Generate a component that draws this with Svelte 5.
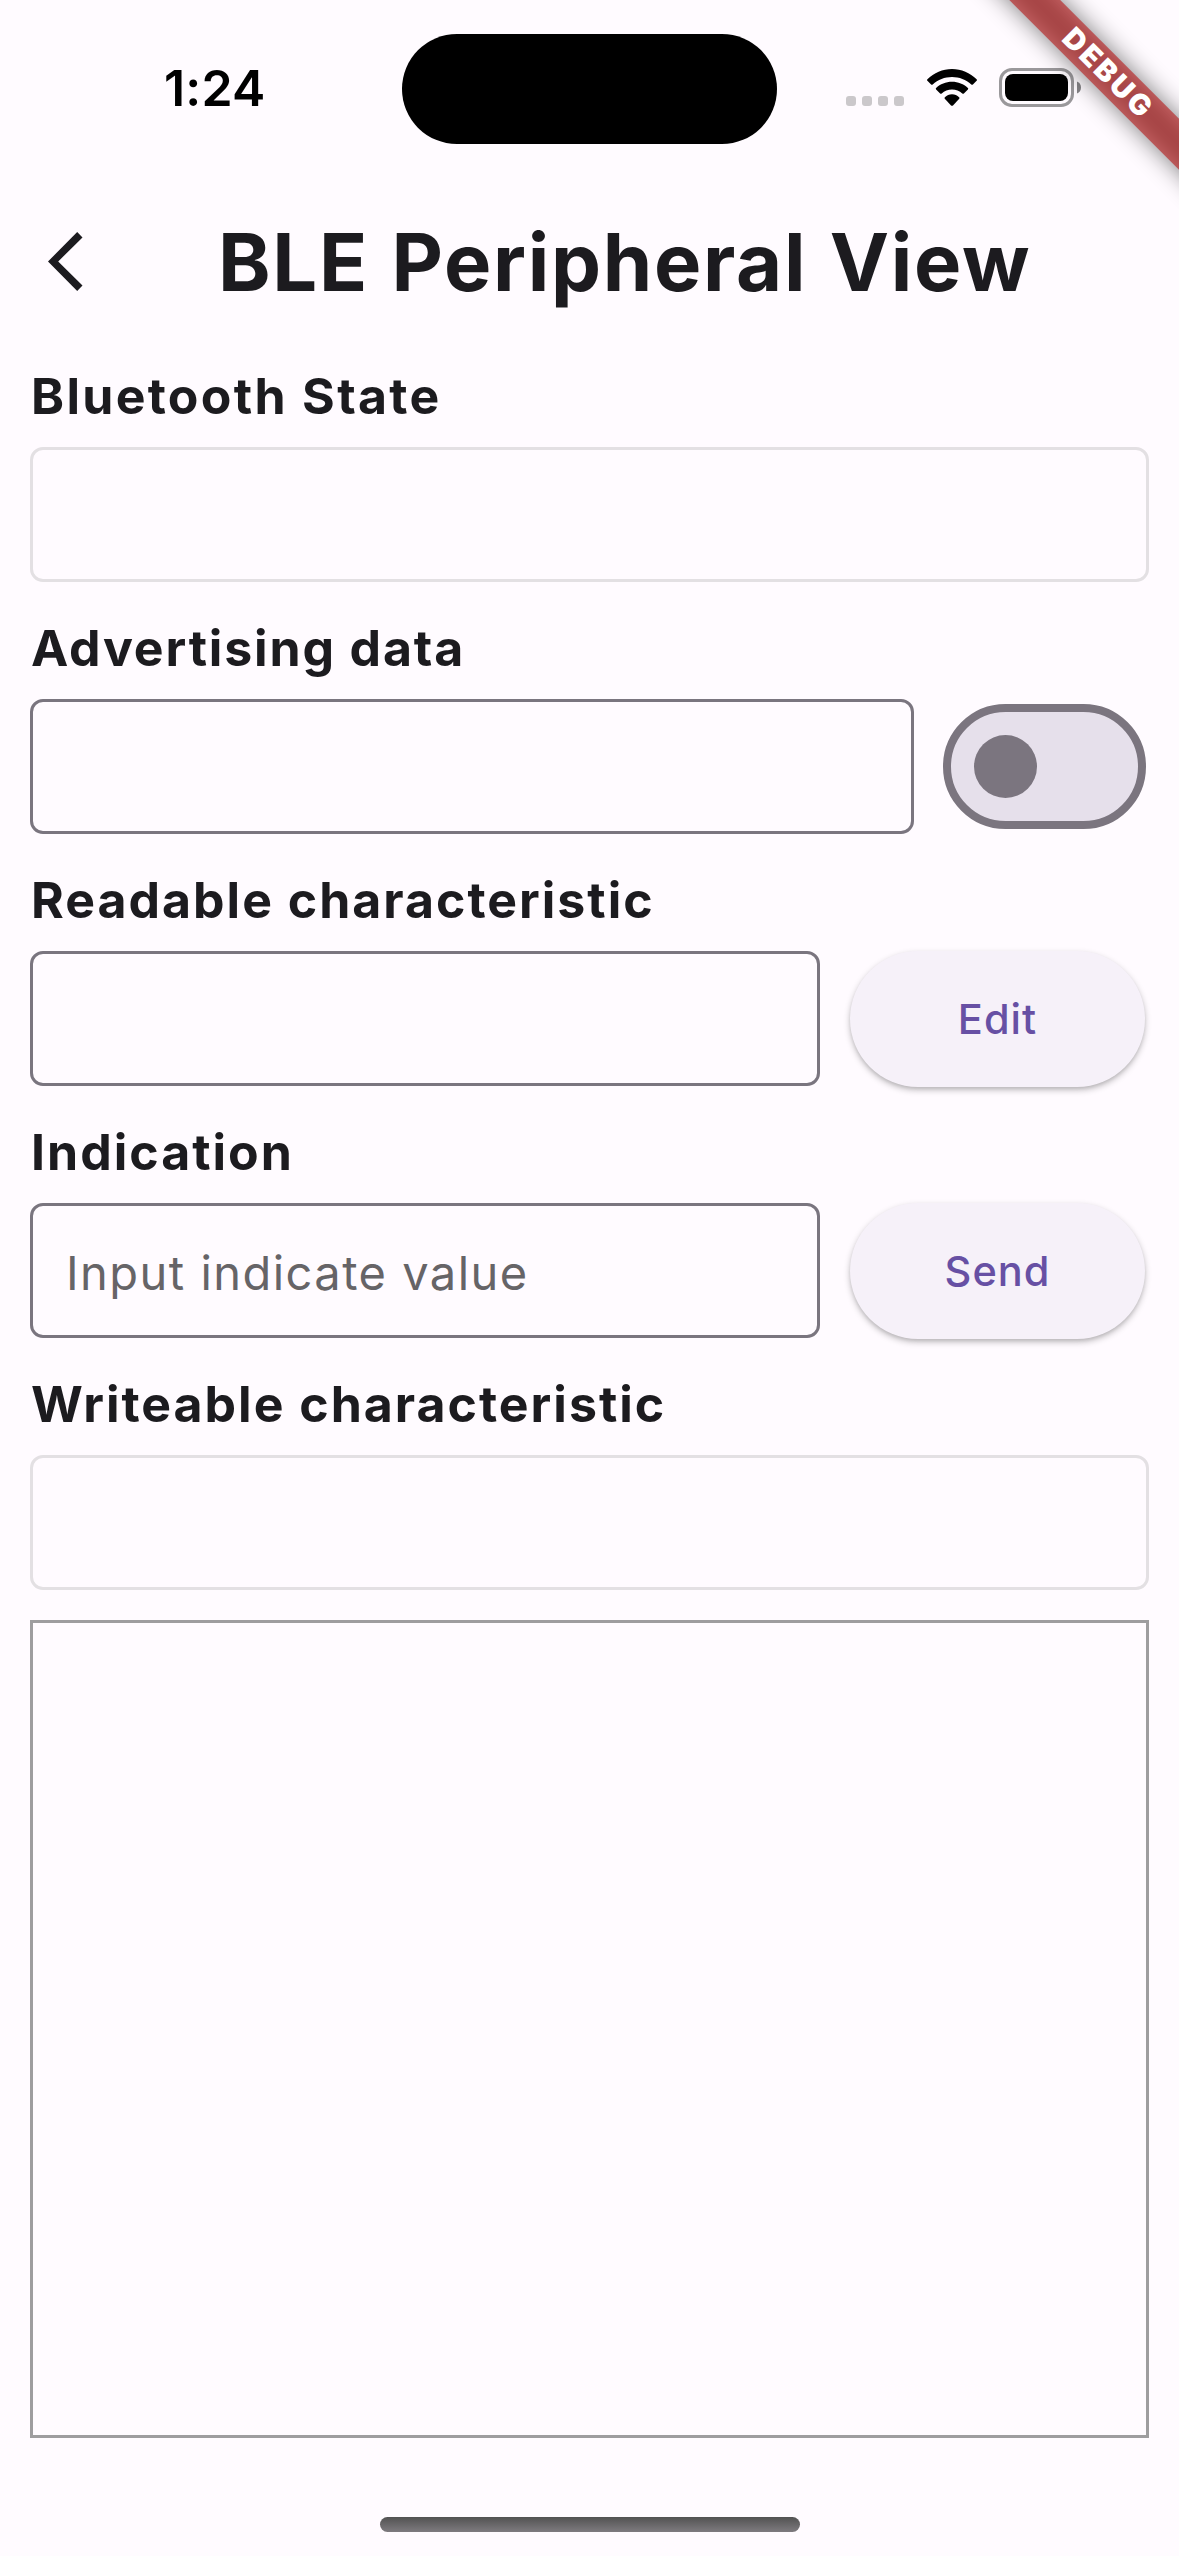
<script>
  let advertising = $state(false);
  let indicateValue = $state('');
</script>

<div class="screen">
  <div class="status-bar">
    <div class="time">1:24</div>
    <div class="island"></div>
    <div class="indicators">
      <div class="signal"><i></i><i></i><i></i><i></i></div>
      <svg class="wifi" viewBox="0 0 50 38" width="50" height="38">
        <path d="M.4 10.200C7 3.800 15.600 0 25 0s18 3.800 24.600 10.200c.5.500.5 1.100 0 1.600l-3.700 3.600c-.5.500-1.100.5-1.600 0C39 10.600 32.300 7.900 25 7.900S11 10.600 5.700 15.400c-.5.500-1.100.5-1.600 0L.4 11.800c-.5-.5-.5-1.100 0-1.600z" />
        <path d="M9.100 18.900C13.300 15.100 18.800 12.800 25 12.800s11.700 2.300 15.900 6.100c.5.500.5 1.100 0 1.600l-4 3.900c-.5.500-1.100.4-1.600 0C32.500 21.900 29 20.500 25 20.500s-7.500 1.400-10.300 3.900c-.5.400-1.100.5-1.600 0l-4-3.900c-.5-.5-.5-1.100 0-1.600z" />
        <path d="M17.900 28.200C19.800 26.400 22.300 25.300 25 25.300s5.200 1.100 7.100 2.900c.5.500.5 1.100.1 1.600L26 36.400c-.6.600-1.400.6-2 0l-6.200-6.600c-.4-.5-.4-1.100.1-1.600z" />
      </svg>
      <svg class="battery" viewBox="0 0 82 39" width="82" height="39">
        <rect x="1.500" y="1.500" width="72" height="36" rx="11.500" fill="none" stroke="#9a989b" stroke-width="3" />
        <rect x="6" y="6" width="63" height="27" rx="8" />
        <path d="M78 13.500c2.600 1 4 3.300 4 6s-1.400 5-4 6z" fill="#858386" />
      </svg>
    </div>
  </div>

  <header>
    <button class="back" aria-label="Back">
      <svg viewBox="0 0 35 59" width="35" height="59">
        <path d="M29.200 0 34.500 5.400 10.200 29.500 34.500 53.600 29.200 59 0 29.500z" fill="#1c1b1f" />
      </svg>
    </button>
    <h1>BLE Peripheral View</h1>
  </header>

  <main>
    <section>
      <h2 class="wide">Bluetooth State</h2>
      <div class="row"><div class="field disabled"></div></div>
    </section>
    <section>
      <h2 class="tight">Advertising data</h2>
      <div class="row adv">
        <div class="field"></div>
        <button
          class="switch"
          class:on={advertising}
          role="switch"
          aria-checked={advertising}
          aria-label="Advertising"
          onclick={() => (advertising = !advertising)}
        ><span class="thumb"></span></button>
      </div>
    </section>
    <section>
      <h2>Readable characteristic</h2>
      <div class="row">
        <div class="field"></div>
        <button class="action">Edit</button>
      </div>
    </section>
    <section>
      <h2>Indication</h2>
      <div class="row">
        <input class="field" placeholder="Input indicate value" bind:value={indicateValue} />
        <button class="action">Send</button>
      </div>
    </section>
    <section>
      <h2>Writeable characteristic</h2>
      <div class="row"><div class="field disabled"></div></div>
    </section>
    <div class="log"></div>
  </main>

  <footer><div class="home"></div></footer>

  <div class="banner">
    <div class="shade"></div>
    <div class="ribbon">DEBUG</div>
  </div>
</div>

<style>
  :global(body) { background: #fffbff; }
  .screen {
    position: relative;
    box-sizing: border-box;
    width: 1179px;
    height: 2556px;
    overflow: hidden;
    display: flex;
    flex-direction: column;
    background: #fffbff;
    color: #1c1b1f;
    font-family: Inter, "Liberation Sans", sans-serif;
  }
  button, input { font-family: inherit; border: 0; padding: 0; margin: 0; background: none; }
  svg { display: block; }

  .status-bar {
    height: 177px;
    flex: none;
    display: grid;
    grid-template-columns: 402px 375px 1fr;
    align-items: start;
    color: #000;
  }
  .time {
    padding: 58px 0 0 164px;
    font-size: 50px;
    line-height: 60px;
    font-weight: 600;
    letter-spacing: 0.2px;
  }
  .island { height: 110px; margin-top: 34px; border-radius: 55px; background: #000; }
  .indicators { display: flex; align-items: flex-start; padding: 68px 0 0 69px; }
  .signal { display: flex; gap: 6px; padding-top: 28px; width: 81px; box-sizing: border-box; }
  .signal i { width: 10px; height: 10px; flex: none; border-radius: 3px; background: #cbc8cb; }
  .wifi { margin-top: 1px; }
  .battery { margin-left: 22px; }

  header { height: 171px; flex: none; display: flex; align-items: center; padding-left: 48px; }
  .back { width: 35px; height: 59px; margin-bottom: 3px; }
  h1 {
    margin: 0 0 1px 135px;
    font-size: 79.5px;
    line-height: 96px;
    font-weight: 700;
    letter-spacing: 1.7px;
    word-spacing: 2px;
    white-space: nowrap;
  }

  main { flex: 1; display: flex; flex-direction: column; padding: 12px 30px 0; }
  section { margin-bottom: 30px; }
  h2 {
    margin: 0;
    height: 87px;
    padding-left: 1px;
    line-height: 72px;
    font-size: 50px;
    font-weight: 700;
    letter-spacing: 2px;
    white-space: nowrap;
    box-sizing: border-box;
  }
  h2.wide { letter-spacing: 2.3px; }
  h2.tight { letter-spacing: 1.850px; }
  .row { display: flex; align-items: center; gap: 30px; height: 135px; }
  .row.adv { gap: 29px; }
  .field {
    flex: 1;
    min-width: 0;
    box-sizing: border-box;
    height: 135px;
    border: 3px solid #7a757f;
    border-radius: 13px;
  }
  .field.disabled { border-color: #e3e0e3; }
  input.field {
    padding: 4px 33px 0;
    font-size: 47px;
    letter-spacing: 1.470px;
    color: #1c1b1f;
  }
  input::placeholder { color: #666467; opacity: 1; }

  .switch {
    box-sizing: border-box;
    width: 203px;
    height: 125px;
    margin-right: 3px;
    border: 8px solid #7b757f;
    border-radius: 63px;
    background: #e6e0eb;
    display: flex;
    align-items: center;
    padding: 0 23px;
  }
  .switch.on { justify-content: flex-end; }
  .thumb { width: 63px; height: 63px; border-radius: 50%; background: #7b757f; }
  .action {
    flex: none;
    width: 295px;
    height: 136px;
    margin-right: 4px;
    border-radius: 68px;
    background: #f6f1f9;
    box-shadow: 0 3px 6px rgba(0, 0, 0, 0.25), 0 2px 3px rgba(0, 0, 0, 0.06);
    color: #6750a4;
    font-size: 41.5px;
    font-weight: 450;
    letter-spacing: 1px;
  }

  .log { height: 818px; box-sizing: border-box; border: 3px solid #9e9d9f; }

  footer { height: 39px; flex: none; display: flex; justify-content: center; align-items: flex-start; }
  .home { width: 420px; height: 15px; border-radius: 7.5px; background: linear-gradient(#525252, #7e7b7f); }

  /* Corner ribbon: rotated around the top right corner of the screen */
  .banner {
    position: absolute;
    top: 0;
    left: 1179px;
    width: 0;
    height: 0;
    transform: rotate(45deg);
  }
  .shade, .ribbon { position: absolute; left: -240px; top: 84px; width: 480px; height: 36px; }
  .shade { background: rgba(0, 0, 0, 0.5); filter: blur(12px); }
  .ribbon {
    background: rgba(183, 28, 28, 0.627);
    color: #fff;
    font-size: 29px;
    font-weight: 900;
    line-height: 35px;
    letter-spacing: 2.8px;
    text-indent: 4px;
    text-align: center;
  }
</style>
